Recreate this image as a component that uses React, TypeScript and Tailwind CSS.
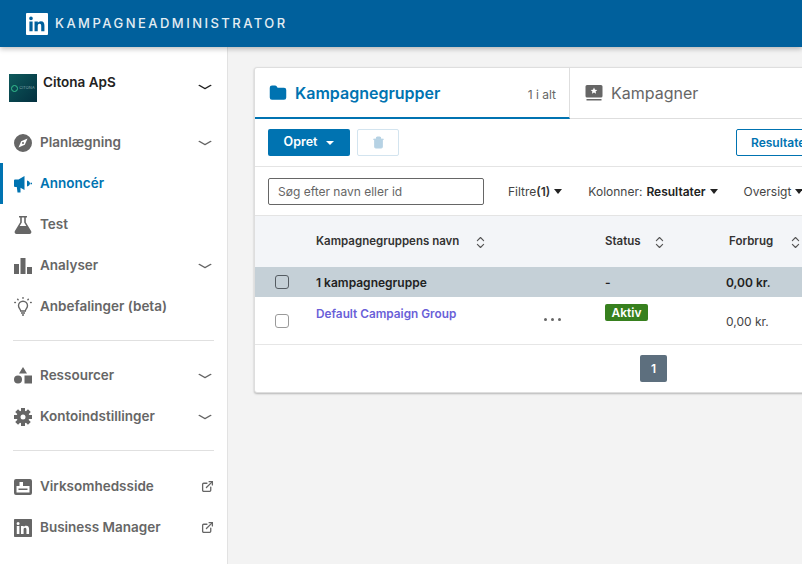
import { ChevronDown, ChevronsUpDown, ExternalLink, Trash2, Folder } from "lucide-react";
import type { ReactNode } from "react";

function LinkedInMark({ className }: { className: string }) {
  return (
    <svg viewBox="0 0 24 24" className={className} fill="currentColor">
      <path d="M1 0h22a1 1 0 0 1 1 1v22a1 1 0 0 1-1 1H1a1 1 0 0 1-1-1V1a1 1 0 0 1 1-1Zm2.7 9.2V20h3.5V9.2H3.700Zm1.750-5.300a2 2 0 1 0 0 4 2 2 0 0 0 0-4ZM9.300 9.200V20h3.500v-5.600c0-1.500.4-2.700 2-2.700s1.800 1.300 1.800 2.800V20h3.500v-6.200c0-3-.8-4.900-3.900-4.900-1.600 0-2.800.8-3.300 1.800V9.200H9.300Z" fillRule="evenodd" />
    </svg>
  );
}

const Compass = (
  <svg viewBox="0 0 18 18" className="size-[18px]" fill="currentColor">
    <path fillRule="evenodd" d="M9 0a9 9 0 1 1 0 18A9 9 0 0 1 9 0Zm4.500 4.500L7.200 7.200 4.500 13.500l6.300-2.700 2.700-6.300ZM9 8a1 1 0 1 1 0 2 1 1 0 0 1 0-2Z" />
  </svg>
);
const Megaphone = (
  <svg viewBox="0 0 18 18" className="size-[18px]" fill="currentColor">
    <path d="M0 5.500a1 1 0 0 1 1-1h3.500L10.500 1v14l-4-2.300V17.500H3.500L2.800 12H1a1 1 0 0 1-1-1z" />
    <path d="M13 5.500c2 .5 3 1.900 3 3s-1 2.500-3 3z" />
    <path d="M16.500 7.700H18v1.600h-1.500z" />
  </svg>
);
const Flask = (
  <svg viewBox="0 0 18 18" className="size-[18px]" fill="currentColor">
    <path fillRule="evenodd" d="M5 0h8v1.500h-1.200v4.700l5.300 8.700c.8 1.400-.1 3.100-1.700 3.100H2.600C1 18 .1 16.300.9 14.900l5.300-8.700V1.500H5V0Zm2.800 1.500v5.100L5.700 10h6.600l-2.100-3.400V1.500H7.800Z" />
  </svg>
);
const Bars = (
  <svg viewBox="0 0 18 18" className="size-[18px]" fill="currentColor">
    <path d="M0 7h5v10H0zM6.500 1h5v16h-5zM13 10h5v7h-5z" />
  </svg>
);
const Bulb = (
  <svg viewBox="0 0 18 20" className="h-[20px] w-[18px]" fill="none" stroke="currentColor">
    <path strokeWidth="1.400" d="M6.700 14c0-1.700-2.200-2.800-2.200-5.300a4.500 4.500 0 0 1 9 0c0 2.500-2.200 3.600-2.200 5.300z" />
    <path strokeWidth="1.500" d="M7 16h4M8 18h2" />
    <path strokeWidth="1.500" strokeLinecap="round" d="M9 .7v.6M3.700 2.300l.4.4M14.300 2.300l-.4.4M.8 5.500h.6M16.600 5.500h.6" />
  </svg>
);
const Shapes = (
  <svg viewBox="0 0 18 18" className="size-[18px]" fill="currentColor">
    <path d="M9 0l4 6.500H5z" />
    <circle cx="4" cy="12.500" r="4" />
    <path d="M10.500 8.500H18V16.500h-7.500z" />
  </svg>
);
const Gear = (
  <svg viewBox="0 0 18 18" className="size-[18px]" fill="currentColor">
    <circle cx="9" cy="9" r="6.400" />
    <g>
      <path d="M7 0h4v18H7zM0 7h18v4H0z" />
      <path d="M7 0h4v18H7zM0 7h18v4H0z" transform="rotate(45 9 9)" />
    </g>
    <circle cx="9" cy="9" r="2.500" fill="#ffffff" />
  </svg>
);
const PageCard = (
  <svg viewBox="0 0 18 18" className="size-[18px]" fill="currentColor">
    <path fillRule="evenodd" d="M2 1h14a2 2 0 0 1 2 2v12a2 2 0 0 1-2 2H2a2 2 0 0 1-2-2V3a2 2 0 0 1 2-2Zm3.500 3v4H2.500v6.500h13V8H9V4H5.500Z" />
    <path d="M4.500 10.500h9V12h-9z" />
  </svg>
);

type NavItem = { icon: ReactNode; label: string; chevron?: boolean; external?: boolean; active?: boolean };

const primaryNav: NavItem[] = [
  { icon: Compass, label: "Planlægning", chevron: true },
  { icon: Megaphone, label: "Annoncér", active: true },
  { icon: Flask, label: "Test" },
  { icon: Bars, label: "Analyser", chevron: true },
  { icon: Bulb, label: "Anbefalinger (beta)" },
];
const resourceNav: NavItem[] = [
  { icon: Shapes, label: "Ressourcer", chevron: true },
  { icon: Gear, label: "Kontoindstillinger", chevron: true },
];
const linkNav: NavItem[] = [
  { icon: PageCard, label: "Virksomhedsside", external: true },
  { icon: <LinkedInMark className="size-[18px]" />, label: "Business Manager", external: true },
];

function NavRow({ item }: { item: NavItem }) {
  return (
    <div
      className={`flex h-[41px] items-center border-l-[3px] pl-[11px] pr-[13px] ${
        item.active ? "border-[#0073b1] text-[#0073b1]" : "border-transparent text-[#666666]"
      }`}
    >
      <span className="flex w-[26px] shrink-0">{item.icon}</span>
      <span className="flex-1 text-[13.5px] font-semibold">{item.label}</span>
      {item.chevron && <ChevronDown className="size-[18px] scale-x-125 scale-y-75 text-[#666666]" strokeWidth={2} />}
      {item.external && <ExternalLink className="size-[13px] text-[#666666]" strokeWidth={2.4} />}
    </div>
  );
}

function Caret() {
  return <span className="ml-1 inline-block border-x-[4px] border-t-[5px] border-x-transparent border-t-[#222222]" />;
}

function Checkbox({ dark }: { dark?: boolean }) {
  return <span className={`block size-[14px] rounded-[3px] border ${dark ? "border-[#555c62]" : "border-[#9a9a9a] bg-white"}`} />;
}

function SortIcon() {
  return <ChevronsUpDown className="size-[15px] text-[#555555]" strokeWidth={1.8} />;
}

export default function App() {
  return (
    <div className="flex h-[564px] w-[802px] flex-col overflow-hidden bg-[#f3f3f3] font-['Inter',sans-serif] text-[#222222]">
      <header className="z-10 flex h-[47px] shrink-0 items-center bg-[#00609c] pl-[26px] shadow-[0_2px_5px_rgba(0,0,0,0.25)]">
        <LinkedInMark className="size-[22px] text-white" />
        <span className="ml-[7px] text-[13px] font-medium tracking-[0.19em] text-[#e4edf3]">KAMPAGNEADMINISTRATOR</span>
      </header>

      <div className="flex min-h-0 flex-1">
        <aside className="w-[228px] shrink-0 border-r border-[#e2e2e2] bg-white">
          <div className="flex h-[56px] items-start pl-[9px] pr-[13px] pt-[27px]">
            <div className="flex size-[28px] shrink-0 items-center justify-center gap-[1px] bg-gradient-to-br from-[#0f5a5c] to-[#04303f]">
              <span className="size-[7px] rounded-full border border-[#35c08e]" />
              <span className="text-[4px] leading-none text-[#7fa3a8]">CITONA</span>
            </div>
            <span className="ml-[6px] flex-1 text-[13.5px] font-semibold leading-[16px] text-[#222222]">Citona ApS</span>
            <ChevronDown className="mt-[4px] size-[18px] scale-x-125 scale-y-75 text-[#222222]" strokeWidth={2} />
          </div>

          <nav className="mt-[19px]">
            {primaryNav.map((item) => (
              <NavRow key={item.label} item={item} />
            ))}
            <div className="mx-[13px] mb-[14px] mt-[13px] border-t border-[#e0e0e0]" />
            {resourceNav.map((item) => (
              <NavRow key={item.label} item={item} />
            ))}
            <div className="mx-[13px] mb-[15px] mt-[13px] border-t border-[#e0e0e0]" />
            {linkNav.map((item) => (
              <NavRow key={item.label} item={item} />
            ))}
          </nav>
        </aside>

        <main className="min-w-0 flex-1 pl-[26px] pt-[20px]">
          <section className="w-[620px] overflow-hidden rounded-[3px] border border-[#dedede] bg-white shadow-[0_1px_2px_rgba(0,0,0,0.25)]">
            <div className="flex h-[51px] border-b border-[#dedede]">
              <div className="-mb-px flex w-[315px] items-center border-b-2 border-r border-b-[#0073b1] border-r-[#dedede] pl-[14px] pr-[13px]">
                <Folder className="size-[18px] fill-[#0073b1] text-[#0073b1]" />
                <span className="ml-[8px] flex-1 text-[16px] font-semibold text-[#0073b1]">Kampagnegrupper</span>
                <span className="pt-[4px] text-[12px] text-[#666666]">1 i alt</span>
              </div>
              <div className="flex items-center pl-[15px]">
                <svg viewBox="0 0 18 18" className="size-[18px]" fill="#666666">
                  <path fillRule="evenodd" d="M2 1h14a1.500 1.500 0 0 1 1.500 1.500V12a1.500 1.500 0 0 1-1.500 1.500H2A1.500 1.500 0 0 1 .5 12V2.500A1.500 1.500 0 0 1 2 1Zm7 2.500-1 2.200-2.300.2 1.700 1.500-.5 2.300 2.100-1.200 2.100 1.200-.5-2.300 1.700-1.500-2.300-.2L9 3.500Z" />
                  <path d="M1.500 15h15v1.500h-15z" />
                </svg>
                <span className="ml-[8px] text-[16px] text-[#666666]">Kampagner</span>
              </div>
            </div>

            <div className="flex h-[48px] items-center border-b border-[#e4e4e4] px-[13px]">
              <button className="flex h-[27px] w-[82px] items-center justify-center rounded-[2px] bg-[#0073b1] text-[12.5px] font-semibold text-white">
                Opret
                <span className="ml-[9px] border-x-[4px] border-t-[4px] border-x-transparent border-t-white" />
              </button>
              <button className="ml-[7px] flex h-[27px] w-[42px] items-center justify-center rounded-[2px] border border-[#d3e4ef]">
                <Trash2 className="size-[13px] fill-[#b6d2e4] text-[#b6d2e4]" />
              </button>
              <button className="ml-[337px] h-[27px] w-[120px] shrink-0 rounded-[2px] border border-[#0073b1] pl-[14px] text-left text-[12px] font-semibold text-[#0073b1]">
                Resultater
              </button>
            </div>

            <div className="flex h-[49px] items-center border-b border-[#e4e4e4] pl-[13px] text-[12px] whitespace-nowrap text-[#444444]">
              <div className="flex h-[27px] w-[216px] items-center rounded-[2px] border border-[#666666] pl-[9px] pt-[1px] text-[#666666]">Søg efter navn eller id</div>
              <span className="ml-[24px] flex items-center pt-[1px]">
                Filtre<b className="font-semibold text-[#333333]">(1)</b>
                <Caret />
              </span>
              <span className="ml-[26px] pt-[1px]">Kolonner:</span>
              <span className="ml-[4px] flex items-center pt-[1px] font-semibold text-[#222222]">
                Resultater
                <Caret />
              </span>
              <span className="ml-[26px] flex items-center pt-[1px]">
                Oversigt
                <Caret />
              </span>
            </div>

            <div className="flex h-[51px] items-center bg-[#f3f5f8] pt-[1px] text-[11.5px] font-semibold text-[#333333]">
              <span className="ml-[61px] w-[157px]">Kampagnegruppens navn</span>
              <SortIcon />
              <span className="ml-[117px] w-[47px]">Status</span>
              <SortIcon />
              <span className="ml-[62px] w-[59px]">Forbrug</span>
              <SortIcon />
            </div>

            <div className="flex h-[30px] items-center bg-[#c5d0d7] text-[12px] font-semibold text-[#222222]">
              <span className="ml-[20px] w-[41px]"><Checkbox dark /></span>
              <span className="w-[289px] pt-[2px]">1 kampagnegruppe</span>
              <span className="w-[121px] pt-[2px]">-</span>
              <span className="pt-[2px]">0,00 kr.</span>
            </div>

            <div className="flex h-[48px] border-b border-[#e6e6e6] text-[12px]">
              <span className="ml-[20px] w-[41px] pt-[17px]"><Checkbox /></span>
              <span className="w-[228px] pt-[9px] text-[11.8px] leading-[16px] font-semibold text-[#6a5fd8]">Default Campaign Group</span>
              <span className="flex w-[61px] gap-[4px] pt-[21px]">
                <i className="size-[3px] rounded-full bg-[#666666]" />
                <i className="size-[3px] rounded-full bg-[#666666]" />
                <i className="size-[3px] rounded-full bg-[#666666]" />
              </span>
              <span className="w-[121px] pt-[7px]">
                <span className="block h-[17px] w-[43px] rounded-[2px] bg-[#37801e] text-center text-[12px] leading-[17px] font-semibold text-white">Aktiv</span>
              </span>
              <span className="pt-[16px] text-[#444444]">0,00 kr.</span>
            </div>

            <div className="flex h-[47px] items-start pl-[385px] pt-[10px]">
              <span className="flex size-[27px] items-center justify-center rounded-[2px] bg-[#5d6f7e] text-[12px] font-semibold text-white">1</span>
            </div>
          </section>
        </main>
      </div>
    </div>
  );
}
